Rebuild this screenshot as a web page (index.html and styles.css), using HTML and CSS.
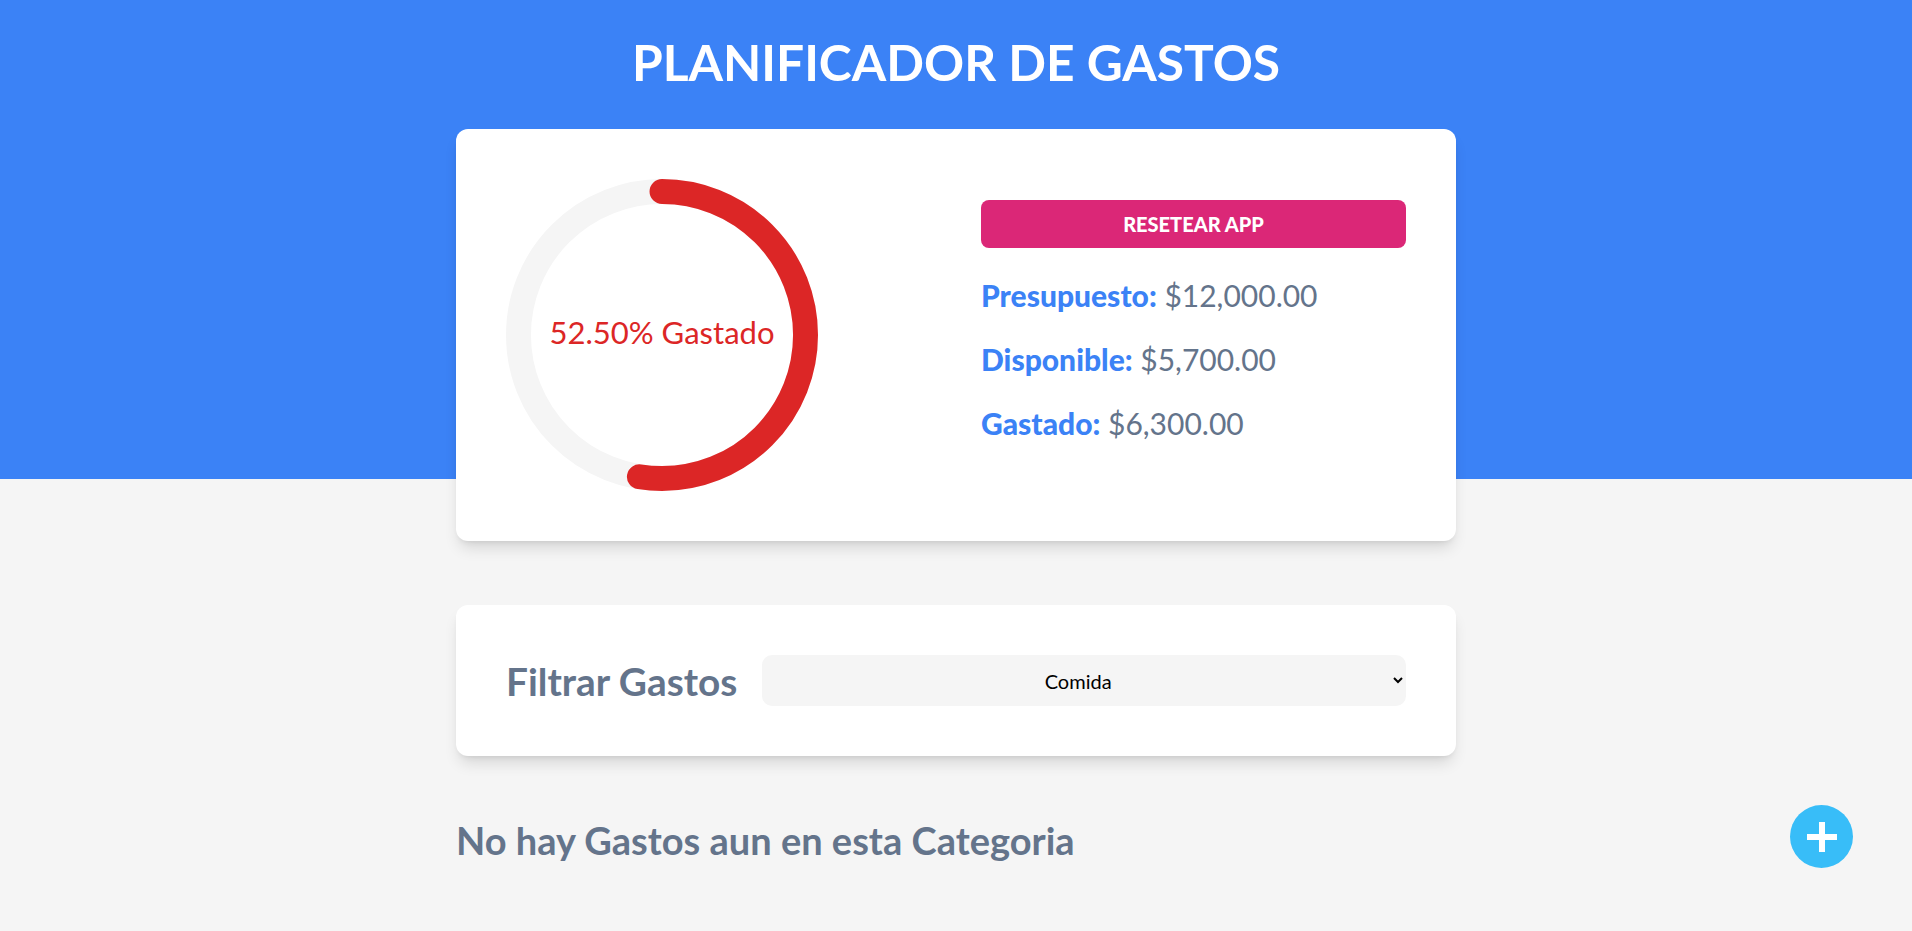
FILE: index.html
```html
<!DOCTYPE html>
<html lang="es">
<head>
<meta charset="utf-8">
<title>Planificador de Gastos</title>
<link rel="stylesheet" href="styles.css">
</head>
<body>
<div class="page">
  <header class="header">
    <h1 class="title">PLANIFICADOR DE GASTOS</h1>
    <section class="card budget">
      <div class="chart">
        <svg class="progress" viewBox="0 0 100 100" width="312" height="312">
          <path class="trail" d="M 50,50 m 0,-46 a 46,46 0 1 1 0,92 a 46,46 0 1 1 0,-92"/>
          <path class="bar" d="M 50,50 m 0,-46 a 46,46 0 1 1 0,92 a 46,46 0 1 1 0,-92"/>
          <text class="pct" x="50" y="48.9">52.50% Gastado</text>
        </svg>
      </div>
      <div class="summary">
        <button class="reset" type="button">RESETEAR APP</button>
        <p class="line"><span class="label">Presupuesto:</span> $12,000.00</p>
        <p class="line"><span class="label">Disponible:</span> $5,700.00</p>
        <p class="line"><span class="label">Gastado:</span> $6,300.00</p>
      </div>
    </section>
  </header>
  <main class="main">
    <section class="card filter">
      <label class="filter-label" for="cat">Filtrar Gastos</label>
      <select id="cat" class="select">
        <option>Comida</option>
      </select>
    </section>
    <h2 class="empty">No hay Gastos aun en esta Categoria</h2>
  </main>
  <button class="add" type="button" aria-label="Nuevo gasto">
    <svg viewBox="0 0 30 30" width="30" height="30"><rect x="0" y="12" width="30" height="6" fill="#fff"/><rect x="12" y="0" width="6" height="30" fill="#fff"/></svg>
  </button>
</div>
</body>
</html>
```

FILE: styles.css
```css
html, body {
  margin: 0;
  padding: 0;
}
body {
  background: #f5f5f5;
  font-family: Lato, "Open Sans", sans-serif;
}
.page {
  min-height: 100vh;
  background: linear-gradient(to bottom, #3b82f6 0, #3b82f6 479px, #f5f5f5 479px, #f5f5f5 100%);
}
.header {
  padding-top: 31px;
}
.title {
  margin: 0;
  text-align: center;
  color: #fff;
  font-size: 49.7px;
  line-height: 62px;
  font-weight: 700;
}
.card {
  width: 1000px;
  margin: 0 auto;
  box-sizing: border-box;
  background: #fff;
  border-radius: 12px;
  padding: 50px;
  box-shadow: 0 10px 15px -3px rgba(0,0,0,0.12), 0 4px 6px -4px rgba(0,0,0,0.12);
}
.budget {
  margin-top: 36px;
  display: grid;
  grid-template-columns: 1fr 1fr;
  gap: 50px;
}
.progress {
  display: block;
  width: 312px;
  height: 312px;
}
.trail {
  fill: none;
  stroke: #f5f5f5;
  stroke-width: 8;
}
.bar {
  fill: none;
  stroke: #dc2626;
  stroke-width: 8;
  stroke-linecap: round;
  stroke-dasharray: 289.027 289.027;
  stroke-dashoffset: 137.288;
}
.pct {
  fill: #dc2626;
  font-size: 9.95px;
  text-anchor: middle;
  dominant-baseline: central;
  font-family: Lato, sans-serif;
}
.summary {
  padding-top: 21px;
}
.reset {
  display: block;
  width: 100%;
  height: 48px;
  border: none;
  border-radius: 8px;
  background: #db2777;
  color: #fff;
  font-family: Lato, sans-serif;
  font-weight: 900;
  font-size: 20px;
  cursor: pointer;
}
.line {
  margin: 19px 0 0;
  font-size: 30px;
  line-height: 45px;
  color: #64748b;
}
.reset + .line {
  margin-top: 25px;
}
.label {
  color: #3b82f6;
  font-weight: 900;
}
.main {
  padding-bottom: 40px;
}
.filter {
  margin-top: 64px;
  display: flex;
  align-items: center;
  gap: 25px;
}
.filter-label {
  color: #64748b;
  font-size: 38.8px;
  font-weight: 700;
  line-height: 48px;
}
.select {
  flex: 1;
  height: 51px;
  border: none;
  border-radius: 10px;
  background: #f5f5f5;
  text-align: center;
  font-family: Lato, sans-serif;
  font-size: 20px;
  color: #000;
  padding: 0 8px;
}
.empty {
  width: 1000px;
  margin: 60px auto 0;
  color: #64748b;
  font-size: 38px;
  line-height: 48px;
  font-weight: 700;
}
.add {
  position: fixed;
  right: 59px;
  bottom: 63px;
  width: 63px;
  height: 63px;
  border: none;
  border-radius: 50%;
  background: #38bdf8;
  padding: 0;
  display: flex;
  align-items: center;
  justify-content: center;
  cursor: pointer;
}
.add svg {
  display: block;
}
```
